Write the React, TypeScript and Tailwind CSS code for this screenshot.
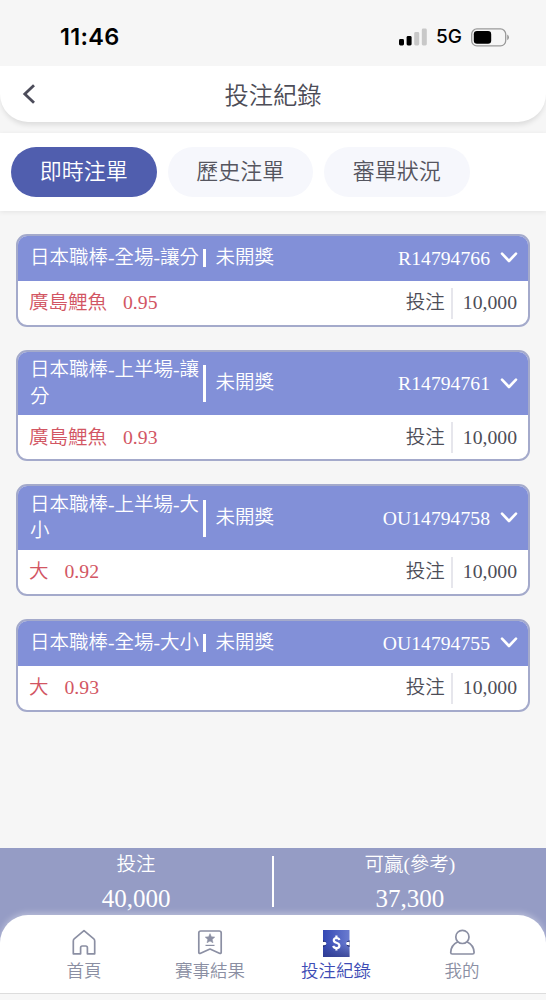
import type { ReactNode } from 'react';

interface Bet {
    id: string;
    title: string;
    pick: string;
    odds: string;
    stake: string;
}

const bets: Bet[] = [
    { id: 'R14794766', title: '日本職棒-全場-讓分', pick: '廣島鯉魚', odds: '0.95', stake: '10,000' },
    { id: 'R14794761', title: '日本職棒-上半場-讓分', pick: '廣島鯉魚', odds: '0.93', stake: '10,000' },
    { id: 'OU14794758', title: '日本職棒-上半場-大小', pick: '大', odds: '0.92', stake: '10,000' },
    { id: 'OU14794755', title: '日本職棒-全場-大小', pick: '大', odds: '0.93', stake: '10,000' },
];

const HomeIcon = () => (
    <svg className="w-7 h-7" viewBox="0 0 28 28" fill="none" stroke="currentColor" strokeWidth="1.7" strokeLinejoin="round">
        <path d="M14 1.6 L4.2 9.9 Q3.3 10.7 3.3 11.9 V24.8 H10.6 V18.8 Q10.6 17 12.3 17 H15.7 Q17.4 17 17.4 18.8 V24.8 H24.7 V11.9 Q24.7 10.7 23.8 9.9 Z" />
    </svg>
);

const ResultIcon = () => (
    <svg className="w-7 h-7" viewBox="0 0 28 28" fill="none" stroke="currentColor" strokeWidth="1.7" strokeLinejoin="round">
        <path d="M4.8 2 H23.2 Q25.2 2 25.2 4 V23.2 Q25.2 25 23.4 24.2 L14 20 L4.6 24.2 Q2.8 25 2.8 23.2 V4 Q2.8 2 4.8 2 Z" />
        <path d="M14 4.6 L15.4 7.8 L18.8 8.1 L16.2 10.4 L17 13.8 L14 12 L11 13.8 L11.8 10.4 L9.2 8.1 L12.6 7.8 Z" fill="currentColor" strokeWidth="0.5" />
        <path d="M9.5 16.4 H18.5" strokeWidth="1.2" />
    </svg>
);

const TicketIcon = () => (
    <svg className="w-7 h-7" viewBox="0 0 28 28">
        <defs>
            <linearGradient id="ticket" x1="0" y1="0" x2="1" y2="0">
                <stop offset="0" stopColor="#3448b4" />
                <stop offset="1" stopColor="#6b7cd0" />
            </linearGradient>
            <linearGradient id="ticketShade" x1="0" y1="0" x2="0" y2="1">
                <stop offset="0.5" stopColor="#2b3580" stopOpacity="0" />
                <stop offset="1" stopColor="#2b3580" stopOpacity="0.65" />
            </linearGradient>
        </defs>
        <path d="M1 1 H27.5 V28 H1 Z" fill="url(#ticket)" />
        <path d="M1 1 H27.5 V28 H1 Z" fill="url(#ticketShade)" />
        <path d="M1 11.2 L3.6 12.4 V16.8 L1 18 Z M27.5 11.2 L24.9 12.4 V16.8 L27.5 18 Z" fill="#1b2467" />
        <path d="M1 13 Q4.4 12.4 4.4 14.6 Q4.4 16.8 1 16.2 Z M27.5 13 Q24.1 12.4 24.1 14.6 Q24.1 16.8 27.5 16.2 Z" fill="#fff" />
        <path d="M17.4 11 Q16.8 9 14.4 9 Q11.8 9.2 11.8 11.3 Q11.8 13.1 14.4 13.8 Q17.4 14.6 17.4 16.8 Q17.2 19 14.5 19.1 Q11.8 19 11.2 16.9 M14.4 6.4 V9 M14.4 19 V21.6" fill="none" stroke="#fff" strokeWidth="2.2" />
    </svg>
);

const UserIcon = () => (
    <svg className="w-7 h-7" viewBox="0 0 28 28" fill="none" stroke="currentColor" strokeWidth="1.7" strokeLinejoin="round">
        <circle cx="14.4" cy="7.9" r="6.6" />
        <path d="M9.9 12.8 C5.6 14.8 2.9 18.6 2.7 23.4 Q2.7 25 4.3 25 H24.5 Q26.1 25 26.1 23.4 C25.9 18.6 23.2 14.8 18.9 12.8" />
    </svg>
);

const SignalIcon = () => (
    <svg className="w-7 h-[18px]" viewBox="0 0 28 18">
        <rect x="0" y="11" width="5" height="6.5" rx="1.4" fill="#000" />
        <rect x="7.6" y="8" width="5" height="9.5" rx="1.4" fill="#000" />
        <rect x="15.2" y="4" width="5" height="13.5" rx="1.4" fill="#c8c8c8" />
        <rect x="22.8" y="0.5" width="5" height="17" rx="1.4" fill="#c8c8c8" />
    </svg>
);

const BatteryIcon = () => (
    <svg className="w-[39px] h-[19px]" viewBox="0 0 39 19">
        <rect x="0.7" y="0.9" width="34" height="17" rx="5.2" fill="none" stroke="#9a9a9a" strokeWidth="1.3" />
        <rect x="2.8" y="3" width="17.4" height="12.8" rx="3.2" fill="#000" />
        <path d="M36.2 6.4 Q38 7.2 38 9.3 Q38 11.4 36.2 12.2 Z" fill="#9a9a9a" />
    </svg>
);

const Tab = ({ label, active }: { label: string; active?: boolean }) => (
    <button className={`w-[145.5px] h-[50px] rounded-full text-[22px] leading-none ${active ? 'bg-[#505eae] text-white' : 'bg-[#f6f7fc] text-[#55555f]'}`}>
        {label}
    </button>
);

const BetCard = ({ bet }: { bet: Bet }) => (
    <div className="rounded-[11px] border-2 border-[#a4aacb] bg-white overflow-hidden text-[19.5px]">
        <div className="min-h-[45px] bg-[#8290d8] text-white flex items-center pl-3 pr-[10px] pt-[5.5px] pb-[5px]">
            <div className="flex items-center">
                <div className="w-[172.5px] leading-[26.5px]">{bet.title}</div>
                <div className="self-stretch my-1 flex items-center">
                    <div className="w-[3px] h-[calc(100%-8px)] min-h-[18px] bg-white" />
                </div>
                <span className="ml-2.5 leading-[26.5px]">未開獎</span>
            </div>
            <span className="ml-auto text-[19.7px] leading-[26.5px]">{bet.id}</span>
            <svg className="ml-2.5 w-[18px] h-3" viewBox="0 0 18 12" fill="none" stroke="currentColor" strokeWidth="2.6" strokeLinecap="round" strokeLinejoin="round">
                <path d="M2 1.6 L9 9 L16 1.6" />
            </svg>
        </div>
        <div className="h-[44px] flex items-center px-[11px] pt-px">
            <span className="text-[#d25663]">{bet.pick}</span>
            <span className="ml-4 text-[19.7px] text-[#d25663]">{bet.odds}</span>
            <span className="ml-auto text-[#4d4d57]">投注</span>
            <div className="ml-1.5 mr-[10px] w-0.5 h-[31px] bg-[#e6e6ec]" />
            <span className="text-[19.7px] text-[#4d4d57]">{bet.stake}</span>
        </div>
    </div>
);

const Total = ({ label, value }: { label: string; value: string }) => (
    <div className="flex-1 flex flex-col items-center text-white pt-px">
        <span className="text-[19.5px] leading-[31px]">{label}</span>
        <span className="text-[25px] leading-[38px]">{value}</span>
    </div>
);

const NavItem = ({ icon, label, active }: { icon: ReactNode; label: string; active?: boolean }) => (
    <div className={`flex-1 flex flex-col items-center ${active ? 'text-[#3d4cb5]' : 'text-[#8b8fa3]'}`}>
        {icon}
        <span className="text-[17.5px] leading-[28px]">{label}</span>
    </div>
);

export default function App() {
    return (
        <div className="h-[1000px] w-[546px] bg-[#f6f6f6] flex flex-col overflow-hidden font-[350] font-['Liberation_Serif','Noto_Sans_CJK_TC',serif]">
            {/* Status bar */}
            <div className="h-[66px] shrink-0 flex items-center justify-between pl-[60px] pr-9 pt-2 font-['Inter',sans-serif] text-black">
                <span className="text-[23.5px] font-semibold tracking-[0.3px]">11:46</span>
                <div className="flex items-center">
                    <SignalIcon />
                    <span className="ml-[9px] mr-[9px] text-[19px] font-medium">5G</span>
                    <BatteryIcon />
                </div>
            </div>

            {/* Title */}
            <header className="h-14 shrink-0 bg-white rounded-b-[28px] shadow-[0_4px_5px_-1px_rgba(0,0,0,0.1)] flex items-center px-[22px]">
                <svg className="w-3.5 h-5" viewBox="0 0 14 20" fill="none" stroke="#4c4c5a" strokeWidth="2.8">
                    <path d="M12 1.2 L2.8 10 L12 18.8" />
                </svg>
                <h1 className="flex-1 text-center pr-3.5 pt-[5px] text-[24.3px] leading-none text-[#4d4d57]">投注紀錄</h1>
            </header>

            <div className="mt-[11px] h-[78px] shrink-0 bg-white shadow-[0_1px_5px_rgba(0,0,0,0.08)] flex items-center gap-[11px] pl-[11px]">
                <Tab label="即時注單" active />
                <Tab label="歷史注單" />
                <Tab label="審單狀況" />
            </div>

            <main className="flex-1 flex flex-col gap-[23px] px-4 pt-[22.5px]">
                {bets.map((bet) => (
                    <BetCard key={bet.id} bet={bet} />
                ))}
            </main>

            {/* Totals and bottom navigation */}
            <footer className="shrink-0 h-[152px] bg-[#959cc5] flex flex-col">
                <div className="h-[67px] shrink-0 flex">
                    <Total label="投注" value="40,000" />
                    <div className="mt-2 w-[1.5px] h-[51px] bg-white" />
                    <Total label="可贏(參考)" value="37,300" />
                </div>
                <nav className="h-[78px] shrink-0 bg-white rounded-t-[28px] shadow-[0_-2px_6px_rgba(255,255,255,0.35)] flex px-[21px] pt-[14px]">
                    <NavItem icon={<HomeIcon />} label="首頁" />
                    <NavItem icon={<ResultIcon />} label="賽事結果" />
                    <NavItem icon={<TicketIcon />} label="投注紀錄" active />
                    <NavItem icon={<UserIcon />} label="我的" />
                </nav>
                <div className="flex-1 bg-[#f7f7f7] border-t border-[#dddddd]" />
            </footer>
        </div>
    );
}
